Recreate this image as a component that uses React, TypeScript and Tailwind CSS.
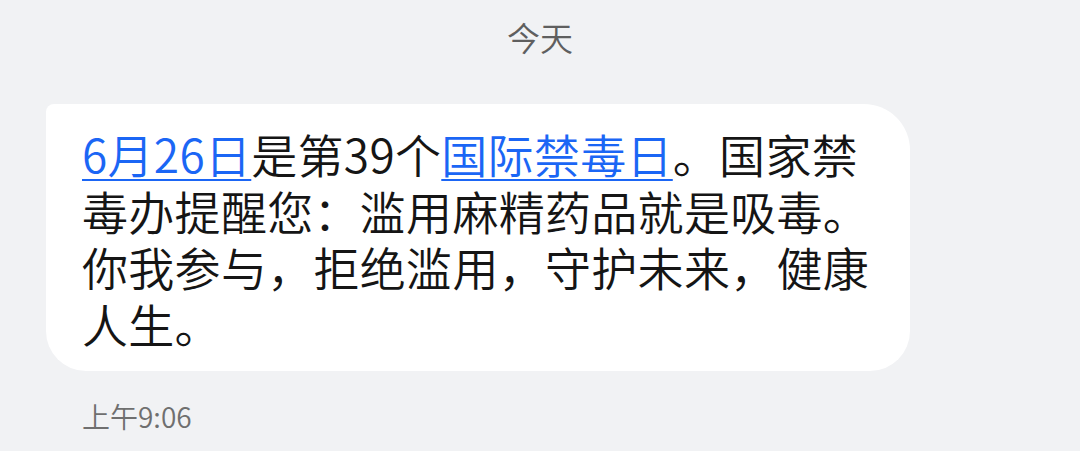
const font = {
  fontFamily: '"Noto Sans CJK SC", "Noto Sans", sans-serif',
};

const Link = ({ children }: { children: string }) => (
  <span className="text-[#1b66f5] underline decoration-[2px] underline-offset-[6px]">{children}</span>
);

const App = () => {
  return (
    <div className="w-[1080px] h-[451px] bg-[#f1f2f4] overflow-hidden" style={font}>
      <div className="h-[75px] flex items-center justify-center text-[33px] font-[350] text-[#5f5f5f]">今天</div>
      <div className="pl-[46px] pt-[29px]">
        <div className="w-[864px] bg-white rounded-tl-[8px] rounded-tr-[46px] rounded-br-[40px] rounded-bl-[40px] pl-[36px] pt-[21px] pb-[20px]">
          <p className="w-[800px] text-[46px] leading-[56.5px] font-[350] tracking-[0.3px] text-[#151515]">
            <Link>6月26日</Link>是第39个<Link>国际禁毒日</Link>。国家禁毒办提醒您：滥用麻精药品就是吸毒。你我参与，拒绝滥用，守护未来，健康人生。
          </p>
        </div>
      </div>
      <div className="pl-[82px] pt-[24px] text-[28px] font-[350] text-[#6f6f6f]">上午9:06</div>
    </div>
  );
};

export default App;
